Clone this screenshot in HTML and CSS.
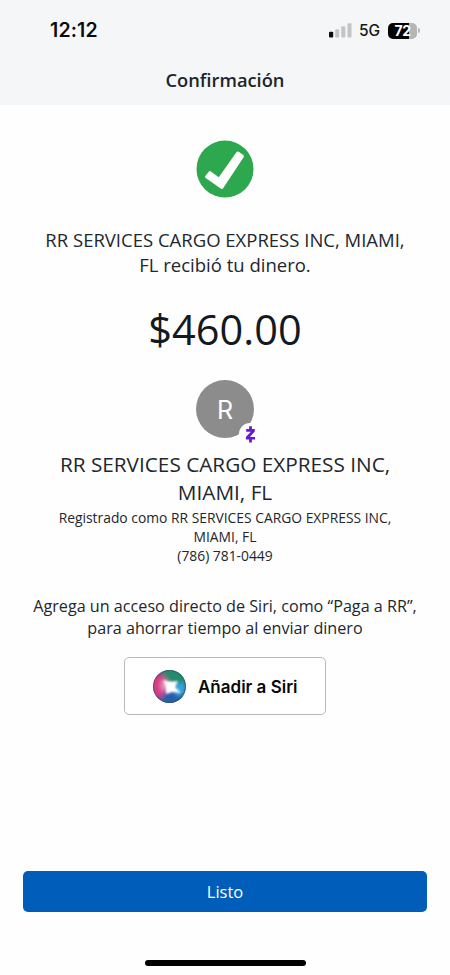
FILE: index.html
```html
<!DOCTYPE html>
<html lang="es">
<head>
<meta charset="utf-8">
<meta name="viewport" content="width=device-width">
<title>Confirmación</title>
<link rel="stylesheet" href="styles.css">
</head>
<body>
<div class="screen">
  <header class="top">
    <div class="status">
      <span class="time">12:12</span>
      <div class="indicators">
        <svg class="signal" width="23" height="15" viewBox="0 0 23 15">
          <rect x="0" y="8.7" width="4.2" height="5.8" rx="1" fill="#0b0b0d"/>
          <rect x="6.2" y="6.2" width="4" height="8.3" rx="1" fill="#c3c4c6"/>
          <rect x="12.3" y="3.2" width="4" height="11.3" rx="1" fill="#c3c4c6"/>
          <rect x="18.5" y="0.2" width="4" height="14.3" rx="1" fill="#c3c4c6"/>
        </svg>
        <span class="network">5G</span>
        <div class="battery"><span class="level">72</span></div>
        <span class="cap"></span>
      </div>
    </div>
    <h1 class="title">Confirmación</h1>
  </header>
  <main class="content">
    <svg class="check" width="58" height="58" viewBox="0 0 58 58">
      <circle cx="29" cy="29" r="28.5" fill="#2da84f"/>
      <path d="M9.3 36.1 L12.8 31.7 Q13.7 30.6 14.9 31.4 L22.8 37.2 L40.4 12.2 Q41.4 10.9 42.7 11.8 L47.3 15.1 Q48.5 15.9 47.6 17.2 L27.3 48 Q26.2 49.6 24.7 48.5 L9.7 38.1 Q8.5 37.2 9.3 36.1Z" fill="#fff"/>
    </svg>
    <p class="message">RR SERVICES CARGO EXPRESS INC, MIAMI,<br>FL recibió tu dinero.</p>
    <p class="amount">$460.00</p>
    <div class="avatar">
      <span class="initial">R</span>
      <span class="badge">
        <svg width="22" height="22" viewBox="0 0 22 22">
          <path d="M7.2 6H15.8V8.6L10.9 13.9H16.1V16.6H6.9V14L11.8 8.7H7.2Z M10.1 3.2H12.9V7H10.1Z M10.1 16H12.9V19.4H10.1Z" fill="#681bce"/>
        </svg>
      </span>
    </div>
    <h2 class="name">RR SERVICES CARGO EXPRESS INC,<br>MIAMI, FL</h2>
    <p class="registered">Registrado como RR SERVICES CARGO EXPRESS INC,<br>MIAMI, FL</p>
    <p class="phone">(786) 781-0449</p>
    <p class="hint">Agrega un acceso directo de Siri, como “Paga a RR”,<br>para ahorrar tiempo al enviar dinero</p>
    <button class="siri">
      <svg class="orb" width="33" height="33" viewBox="0 0 33 33">
        <defs>
          <clipPath id="ball"><circle cx="16.5" cy="16.5" r="16.5"/></clipPath>
          <filter id="soft" x="-50%" y="-50%" width="200%" height="200%"><feGaussianBlur stdDeviation="2"/></filter>
          <filter id="glow" x="-50%" y="-50%" width="200%" height="200%"><feGaussianBlur stdDeviation="1.3"/></filter>
        </defs>
        <g clip-path="url(#ball)">
          <rect width="33" height="33" fill="#4a5d8c"/>
          <g filter="url(#soft)">
            <path d="M7 -2H35V15L16 15Z" fill="#258a6c"/>
            <path d="M-2 4L10 5L17 15L11 27L-2 28Z" fill="#d63d86"/>
            <path d="M6 36L11 22L20 19L35 24V36Z" fill="#285fa8"/>
            <path d="M18 14L32 13L32 23L24 26Z" fill="#36a9df"/>
            <path d="M8 10L16 12L17 19L8 21Z" fill="#ef8fb8"/>
          </g>
          <path d="M10 10L17 12L25 11L22 17L28 23L19 22L13 24L13 17Z" fill="#fff" filter="url(#glow)"/>
          <circle cx="17.5" cy="16" r="3.6" fill="#fff" filter="url(#glow)"/>
          <circle cx="16.5" cy="16.5" r="16" fill="none" stroke="#42465f" stroke-opacity=".5"/>
        </g>
      </svg>
      <span class="siri-label">Añadir a Siri</span>
    </button>
  </main>
  <footer class="bottom">
    <button class="done">Listo</button>
    <div class="home"></div>
  </footer>
</div>
</body>
</html>
```
FILE: styles.css
```css
* { box-sizing: border-box; margin: 0; padding: 0; }
body { background: #fefefe; font-family: "Open Sans", sans-serif; color: #22272e; }
button { font: inherit; }
.screen { width: 450px; height: 975px; display: flex; flex-direction: column; overflow: hidden; }
.top { height: 105px; background: #f5f6f8; }
.status { height: 60px; padding: 0 30px 0 50px; display: flex; align-items: center; justify-content: space-between; }
.time { font: 600 19.5px/24px Inter, sans-serif; color: #0b0b0d; letter-spacing: 0.15px; }
.indicators { display: flex; align-items: center; padding-top: 1px; }
.signal { margin-right: 7px; }
.network { font: 500 15.5px/20px Inter, sans-serif; color: #161719; width: 22px; margin-right: 7px; }
.battery { width: 29px; height: 16px; border-radius: 5px; background: linear-gradient(90deg, #050505 74%, #b5b6b8 74%); text-align: center; }
.level { display: block; font: 700 14px/16px Inter, sans-serif; color: #fff; letter-spacing: -0.4px; }
.cap { width: 2px; height: 5px; margin-left: 1px; border-radius: 0 2px 2px 0; background: #b5b6b8; }
.title { font-size: 18.3px; font-weight: 600; line-height: 24px; padding-top: 8px; text-align: center; color: #20252b; }
.content { flex: 1; display: flex; flex-direction: column; align-items: center; padding-top: 35px; text-align: center; white-space: nowrap; }
.message { margin-top: 29px; font-size: 18.5px; line-height: 25px; }
.amount { margin-top: 22px; font-size: 41.5px; line-height: 60px; color: #14191f; }
.avatar { position: relative; width: 58px; height: 58px; margin-top: 21px; border-radius: 50%; background: #8c8c8d; display: flex; align-items: center; justify-content: center; }
.initial { font: 400 25px/30px Inter, sans-serif; color: #fff; padding-top: 2px; }
.badge { position: absolute; left: 43px; top: 43px; width: 22px; height: 22px; border-radius: 50%; background: #fefefe; }
.badge svg { display: block; }
.name { margin-top: 12px; font-size: 20.75px; font-weight: 400; line-height: 28px; }
.registered { margin-top: 2px; font-size: 13.85px; line-height: 19px; }
.phone { font-size: 13.85px; line-height: 20px; }
.hint { margin-top: 29px; font-size: 16.17px; line-height: 22px; }
.siri { width: 202px; height: 58px; margin-top: 18px; border: 1.5px solid #b9b9bb; border-radius: 5px; background: #fff; display: flex; align-items: center; padding-left: 28px; }
.orb { margin-right: 12px; }
.siri-label { font: 600 17px/24px Inter, sans-serif; color: #080808; padding-top: 1px; }
.bottom { height: 104px; display: flex; flex-direction: column; align-items: center; }
.done { width: 404px; height: 41px; border: 0; border-radius: 5px; background: #005db9; color: #fff; font-size: 16.5px; font-weight: 500; line-height: 41px; }
.home { width: 161px; height: 6px; margin-top: 47.5px; border-radius: 3px; background: #000; }
```
